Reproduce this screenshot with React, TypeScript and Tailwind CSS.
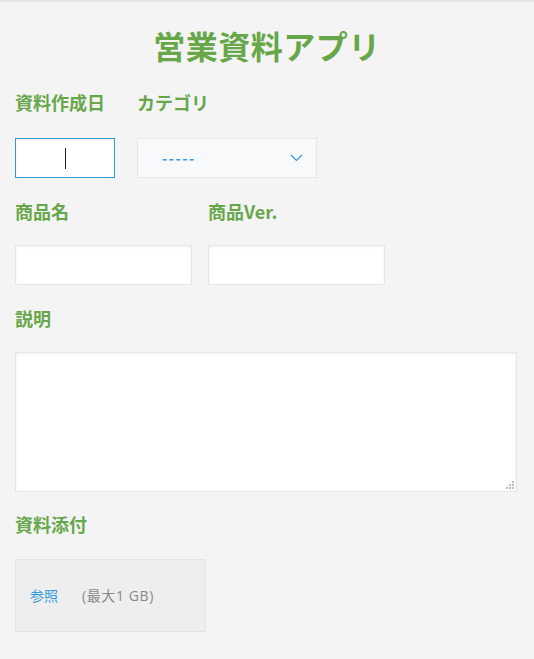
import { useState } from "react";

const label = "block h-6 leading-6 text-[18px] font-bold text-[#67a74a] whitespace-nowrap";
const box = "h-10 border border-[#e3e7e8] bg-white shadow-[inset_0_1px_3px_rgba(0,0,0,0.07)]";

export default function App() {
  const [category] = useState("-----");

  return (
    <div
      className="min-h-[659px] w-[534px] bg-[#f4f4f4] border-t-2 border-[#e5e5e5] pl-[15px]"
      style={{ fontFamily: '"Noto Sans CJK JP", "Noto Sans", sans-serif' }}
    >
      <h1 className="pt-[24px] pr-[15px] text-center text-[32px] leading-[38px] font-bold text-[#67a74a] tracking-[0.5px]">
        営業資料アプリ
      </h1>

      <div className="mt-[26px] flex gap-[22px]">
        <div>
          <span className={label}>資料作成日</span>
          <div className="mt-[24px] flex h-10 w-[100px] items-center justify-center border border-[#3498db] bg-white shadow-[inset_0_1px_3px_rgba(0,0,0,0.07)]">
            <span className="ml-[1px] block h-[21px] w-[1px] bg-[#222]" />
          </div>
        </div>
        <div>
          <span className={label}>カテゴリ</span>
          <div className="mt-[24px] flex h-10 w-[180px] items-center justify-between border border-[#e3e7e8] bg-[#f7f9fa] pl-[24px] pr-[13px]">
            <span className="text-[14px] font-semibold text-[#3498db] tracking-[1.6px]">{category}</span>
            <svg width="13" height="8" viewBox="0 0 13 8" fill="none" stroke="#3498db" strokeWidth="1.2">
              <path d="M1 1l5.5 5.5L12 1" />
            </svg>
          </div>
        </div>
      </div>

      <div className="mt-[21px] flex gap-[16px]">
        <div>
          <span className={label}>商品名</span>
          <div className={`mt-[22px] w-[177px] ${box}`} />
        </div>
        <div>
          <span className={label}>商品Ver.</span>
          <div className={`mt-[22px] w-[177px] ${box}`} />
        </div>
      </div>

      <div className="mt-[21px]">
        <span className={label}>説明</span>
        <div className={`relative mt-[22px] h-[140px] w-[502px] ${box}`}>
          <svg className="absolute right-[2px] bottom-[2px]" width="9" height="9" viewBox="0 0 9 9" fill="#b8bec4">
            <rect x="7" y="1" width="2" height="2" />
            <rect x="4" y="4" width="2" height="2" />
            <rect x="7" y="4" width="2" height="2" />
            <rect x="1" y="7" width="2" height="2" />
            <rect x="4" y="7" width="2" height="2" />
            <rect x="7" y="7" width="2" height="2" />
          </svg>
        </div>
      </div>

      <div className="mt-[20px]">
        <span className={label}>資料添付</span>
        <div className="mt-[23px] flex h-[73px] w-[191px] items-center border border-[#e3e3e3] bg-[#eeeeee] pl-[14px] text-[14px]">
          <span className="text-[#3498db]">参照</span>
          <span
            className="ml-[24px] text-[#888] tracking-[0.6px]"
            style={{ fontFamily: '"Open Sans", "Noto Sans CJK JP", sans-serif' }}
          >
            (最大1 GB)
          </span>
        </div>
      </div>
    </div>
  );
}
